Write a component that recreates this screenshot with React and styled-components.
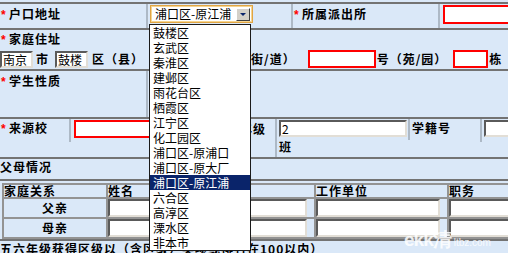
import React from 'react';
import styled, { createGlobalStyle } from 'styled-components';

const districts = [
  '鼓楼区', '玄武区', '秦淮区', '建邺区', '雨花台区', '栖霞区', '江宁区', '化工园区',
  '浦口区-原浦口', '浦口区-原大厂', '浦口区-原江浦', '六合区', '高淳区', '溧水区', '非本市',
];

const parents = ['父亲', '母亲'];

const GlobalStyle = createGlobalStyle`
  html, body {
    margin: 0;
    padding: 0;
    background: #dae8f8;
  }
  body {
    font-family: "Noto Sans CJK SC", "Liberation Sans", sans-serif;
    font-size: 12px;
    color: #000;
  }
`;

const Page = styled.div`
  position: relative;
  width: 508px;
  height: 253px;
  overflow: hidden;
  padding-top: 2px;
  box-sizing: border-box;
  background: #dae8f8;
`;

const Row = styled.div`
  display: flex;
  flex-direction: ${p => (p.$column ? 'column' : 'row')};
  align-items: flex-start;
  height: ${p => p.$h}px;
  border-top: 2px solid #737373;
  white-space: nowrap;
`;

const Cell = styled.div`
  flex: none;
  width: ${p => (p.$w ? `${p.$w}px` : 'auto')};
  height: ${p => (p.$h ? `${p.$h}px` : '100%')};
  box-sizing: border-box;
  padding: ${p => p.$pad || '0'};
  border-left: ${p => (p.$line ? '2px solid #adb9c6' : 'none')};
`;

const Label = styled.div`
  font-weight: bold;
  letter-spacing: 1px;
  line-height: 14px;
  margin-top: ${p => p.$mt || 0}px;
`;

const Star = styled.span`
  display: inline-block;
  width: 8px;
  margin-left: 1px;
  color: #f00;
  font-family: "Liberation Sans", sans-serif;
  font-weight: bold;
  letter-spacing: 0;
`;

const Text = styled.span`
  font-weight: bold;
  letter-spacing: 1px;
  line-height: 14px;
  margin-left: ${p => p.$ml || 0}px;
`;

const RedInput = styled.input`
  display: block;
  flex: none;
  width: ${p => p.$w}px;
  height: ${p => p.$h || 18}px;
  box-sizing: border-box;
  margin: ${p => p.$mt || 0}px 0 0 ${p => p.$ml || 0}px;
  padding: 0;
  border: 2px solid #f00;
  background: #fff;
  outline: none;
`;

const SunkenInput = styled.input`
  display: block;
  flex: none;
  width: ${p => (p.$w ? `${p.$w}px` : 'calc(100% - 7px)')};
  height: ${p => p.$h || 18}px;
  box-sizing: border-box;
  margin: ${p => p.$mt || 0}px 0 0 ${p => p.$ml || 0}px;
  padding: 0 0 0 1px;
  border-top: 2px solid #5a5a5a;
  border-left: 2px solid #5a5a5a;
  border-bottom: 2px solid #e2ded6;
  border-right: 2px solid #e2ded6;
  background: #fff;
  font: 12px "Noto Sans CJK SC", sans-serif;
  color: #000;
  outline: none;
`;

const AddrLine = styled.div`
  display: flex;
  align-items: center;
  height: 18px;
`;

const SelectBox = styled.div`
  display: flex;
  align-items: center;
  justify-content: space-between;
  width: 103px;
  height: 18px;
  box-sizing: border-box;
  margin-top: 1px;
  padding: 0 2px 0 4px;
  border: 1px solid #e0a444;
  box-shadow: inset 0 0 0 1px #f6d58f;
  background: #fff;
  line-height: 14px;
`;

const DropButton = styled.div`
  display: flex;
  align-items: center;
  justify-content: center;
  width: 14px;
  height: 13px;
  box-sizing: border-box;
  background: #d4d0c8;
  border-top: 1px solid #fff;
  border-left: 1px solid #fff;
  border-bottom: 1px solid #404040;
  border-right: 1px solid #404040;
`;

const Arrow = styled.span`
  width: 0;
  height: 0;
  border-left: 3px solid transparent;
  border-right: 3px solid transparent;
  border-top: 3px solid #0a246a;
`;

const DropList = styled.ul`
  position: absolute;
  left: 149px;
  top: 24px;
  width: 102px;
  height: 227px;
  box-sizing: border-box;
  margin: 0;
  padding: 0;
  list-style: none;
  background: #fff;
  border: 1px solid #1a1a1a;
`;

const Option = styled.li`
  height: 15px;
  line-height: 15px;
  padding-left: 3px;
  white-space: nowrap;
  background: ${p => (p.$selected ? '#0a246a' : 'transparent')};
  color: ${p => (p.$selected ? '#fff' : '#000')};
`;

const Table = styled.table`
  table-layout: fixed;
  border-collapse: separate;
  border-spacing: 0;
  width: 580px;
  margin: 2px 0 0 2px;
  border-top: 2px solid #939393;
  border-left: 2px solid #939393;
`;

const Th = styled.th`
  width: ${p => p.$w}px;
  height: 12px;
  box-sizing: border-box;
  padding: 0;
  text-align: left;
  font-weight: bold;
  letter-spacing: 1px;
  line-height: 12px;
  border-right: 2px solid #939393;
  border-bottom: 2px solid #939393;
`;

const Td = styled.td`
  height: 18px;
  padding: 0;
  text-align: center;
  vertical-align: middle;
  font-weight: ${p => (p.$bold ? 'bold' : 'normal')};
  letter-spacing: 1px;
  line-height: 14px;
  border-right: 2px solid #939393;
  border-bottom: 2px solid #939393;
`;

const Watermark = styled.div`
  position: absolute;
  left: 404px;
  top: 227px;
  display: flex;
  align-items: baseline;
  color: rgba(255, 255, 255, 0.85);
  font: bold 19px "Liberation Sans", sans-serif;
  letter-spacing: -1px;
  white-space: nowrap;
`;

const WatermarkSmall = styled.span`
  font-size: 10px;
  font-weight: normal;
  letter-spacing: 0;
  margin-left: 3px;
`;

const Req = ({ children }) => (
  <Label>
    <Star>*</Star>
    {children}
  </Label>
);

export default function App() {
  return (
    <Page>
      <GlobalStyle />
      <Row $h={24}>
        <Cell $w={146} $pad="3px 0 0 0"><Req>户口地址</Req></Cell>
        <Cell $w={145} $line $pad="0 0 0 2px">
          <SelectBox>
            <span>浦口区-原江浦</span>
            <DropButton><Arrow /></DropButton>
          </SelectBox>
        </Cell>
        <Cell $w={147} $line $pad="3px 0 0 0"><Req>所属派出所</Req></Cell>
        <Cell $w={70} $line $pad="0 0 0 3px"><RedInput $w={80} $h={19} $mt={1} /></Cell>
      </Row>

      <Row $h={39} $column>
        <Cell $h={20} $pad="2px 0 0 0"><Req>家庭住址</Req></Cell>
        <AddrLine>
          <SunkenInput $w={33} $h={17} defaultValue="南京" readOnly />
          <Text $ml={3}>市</Text>
          <SunkenInput $w={33} $h={17} $ml={6} defaultValue="鼓楼" readOnly />
          <Text $ml={4}>区（县）</Text>
          <RedInput $w={86} $ml={6} />
          <Text $ml={2}>（街/道）</Text>
          <RedInput $w={68} $ml={12} />
          <Text $ml={1}>号（苑/园）</Text>
          <RedInput $w={35} $ml={6} />
          <Text $ml={1}>栋</Text>
        </AddrLine>
      </Row>

      <Row $h={46}>
        <Cell $w={146} $pad="3px 0 0 0"><Req>学生性质</Req></Cell>
        <Cell $w={200} $line />
      </Row>

      <Row $h={38}>
        <Cell $w={69} $h={23} $pad="2px 0 0 0"><Req>来源校</Req></Cell>
        <Cell $w={206} $h={23} $line $pad="1px 0 0 3px">
          <AddrLine>
            <RedInput $w={164} />
            <Text $ml={2}>年级</Text>
          </AddrLine>
        </Cell>
        <Cell $w={133} $line $pad="1px 0 0 2px">
          <SunkenInput $w={128} $h={17} defaultValue="2" readOnly />
          <Label $mt={3}>班</Label>
        </Cell>
        <Cell $w={72} $h={21} $line $pad="2px 0 0 2px"><Label>学籍号</Label></Cell>
        <Cell $w={40} $h={23} $line $pad="1px 0 0 2px"><SunkenInput $w={60} $h={17} /></Cell>
      </Row>

      <Row $h={20}>
        <Label $mt={1}>父母情况</Label>
      </Row>

      <Row $h={58}>
        <Table>
          <thead>
            <tr>
              <Th $w={104}>家庭关系</Th>
              <Th $w={102}>姓名</Th>
              <Th $w={106}>年龄</Th>
              <Th $w={133}>工作单位</Th>
              <Th $w={133}>职务</Th>
            </tr>
          </thead>
          <tbody>
            {parents.map(p => (
              <tr key={p}>
                <Td $bold>{p}</Td>
                <Td><SunkenInput /></Td>
                <Td><SunkenInput /></Td>
                <Td><SunkenInput /></Td>
                <Td><SunkenInput /></Td>
              </tr>
            ))}
          </tbody>
        </Table>
      </Row>

      <Row $h={14}>
        <Label $mt={1}>五六年级获得区级以（含区级）奖项或排名在100以内）</Label>
      </Row>

      <DropList>
        {districts.map(d => (
          <Option key={d} $selected={d === '浦口区-原江浦'}>{d}</Option>
        ))}
      </DropList>

      <Watermark>ekk清<WatermarkSmall>ltbz.com</WatermarkSmall></Watermark>
    </Page>
  );
}
